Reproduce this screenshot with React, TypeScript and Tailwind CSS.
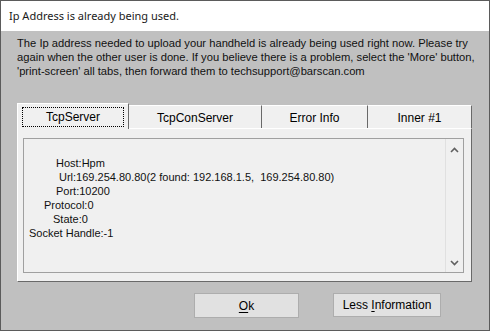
import React from 'react';

const tabs = [
  { label: 'TcpServer', w: 'w-[112px]' },
  { label: 'TcpConServer', w: 'w-[133px]' },
  { label: 'Error Info', w: 'w-[106px]' },
  { label: 'Inner #1', w: 'w-[104px]' },
];

const rows = [
  { text: 'Host:Hpm', pad: 'pl-[32px]' },
  { text: 'Url:169.254.80.80(2 found: 192.168.1.5,  169.254.80.80)', pad: 'pl-[35px]' },
  { text: 'Port:10200', pad: 'pl-[32px]' },
  { text: 'Protocol:0', pad: 'pl-[20px]' },
  { text: 'State:0', pad: 'pl-[29px]' },
  { text: 'Socket Handle:-1', pad: 'pl-[5px]' },
];

const App: React.FC = () => {
  return (
    <div className="w-[490px] h-[331px] border border-[#5b5b5b] flex flex-col bg-[#c0c0c0] font-['Liberation_Sans',Arial,sans-serif] text-black overflow-hidden">
      <div className="h-[30px] shrink-0 bg-white flex items-center pl-[8px] text-[11px] font-['Noto_Sans',sans-serif] text-[#1a1a1a]">
        Ip Address is already being used.
      </div>

      <div className="flex-1 flex flex-col px-[16px]">
        <p className="pt-[5px] text-[11.2px] leading-[14px] text-[#111] whitespace-nowrap">
          The Ip address needed to upload your handheld is already being used right now. Please try
          <br />
          again when the other user is done. If you believe there is a problem, select the 'More' button,
          <br />
          'print-screen' all tabs, then forward them to techsupport@barscan.com
        </p>

        <div className="mt-[24px] w-[455px]">
          <div className="flex items-end h-[26px]">
            {tabs.map((t, i) =>
              i === 0 ? (
                <div
                  key={t.label}
                  className={`${t.w} h-[26px] bg-[#f0f0f0] border-t border-l border-white border-r border-r-[#696969] relative z-10 -mb-px flex items-center justify-center px-[4px] pt-[1px]`}
                >
                  <div className="w-full h-[20px] border border-dotted border-black flex items-center justify-center text-[12px]">
                    {t.label}
                  </div>
                </div>
              ) : (
                <div
                  key={t.label}
                  className={`${t.w} h-[23px] bg-[#f0f0f0] border-t border-white border-r border-r-[#696969] flex items-center justify-center text-[12px] pt-[2px]`}
                >
                  {t.label}
                </div>
              )
            )}
          </div>

          <div className="h-[154px] bg-[#f0f0f0] border-t border-l border-white border-r border-b border-r-[#696969] border-b-[#696969] pt-[9px] pl-[5px] pr-[7px] pb-[8px]">
            <div className="h-full border border-[#a0a0a0] flex">
              <div className="flex-1 pt-[17px] text-[11px] leading-[14px] text-[#111] whitespace-pre">
                {rows.map((r) => (
                  <div key={r.text} className={r.pad}>
                    {r.text}
                  </div>
                ))}
              </div>
              <div className="w-[18px] border-l border-[#e0e0e0] flex flex-col justify-between items-center py-[4px]">
                <svg width="9" height="6" viewBox="0 0 9 6" className="mt-[4px]">
                  <path d="M1 5 L4.5 1.5 L8 5" fill="none" stroke="#606060" strokeWidth="1.6" />
                </svg>
                <svg width="9" height="6" viewBox="0 0 9 6" className="mb-[2px]">
                  <path d="M1 1 L4.5 4.5 L8 1" fill="none" stroke="#606060" strokeWidth="1.6" />
                </svg>
              </div>
            </div>
          </div>
        </div>

        <div className="flex mt-[11px]">
          <button className="ml-[177px] w-[105px] h-[25px] bg-[#e1e1e1] border border-[#adadad] text-[12px]">
            <span className="underline underline-offset-2">O</span>k
          </button>
          <button className="ml-[34px] w-[108px] h-[24px] bg-[#e1e1e1] border border-[#adadad] text-[12px]">
            Less <span className="underline underline-offset-2">I</span>nformation
          </button>
        </div>
      </div>
    </div>
  );
};

export default App;
